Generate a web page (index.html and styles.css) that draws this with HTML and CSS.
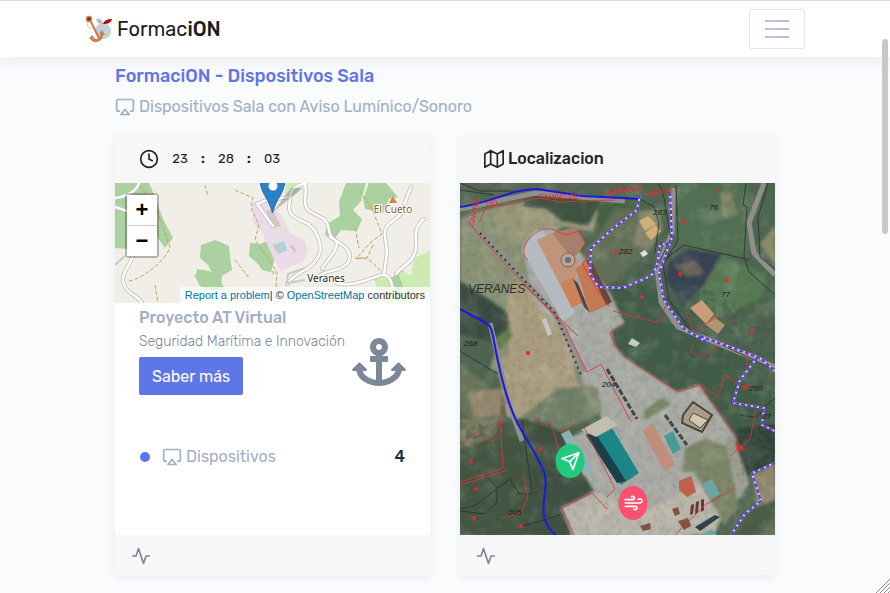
FILE: index.html
```html
<!DOCTYPE html>
<html lang="es">
<head>
<meta charset="utf-8">
<meta name="viewport" content="width=device-width, initial-scale=1">
<title>FormaciON</title>
<link rel="stylesheet" href="styles.css">
</head>
<body>
<svg class="sprite" aria-hidden="true">
  <symbol id="airplay" viewBox="0 0 24 24"><path d="M5 17H4a2 2 0 0 1-2-2V5a2 2 0 0 1 2-2h16a2 2 0 0 1 2 2v10a2 2 0 0 1-2 2h-1"/><path d="M12 15l5 6H7z"/></symbol>
  <symbol id="activity" viewBox="0 0 24 24"><path d="M22 12h-4l-3 9L9 3l-3 9H2"/></symbol>
</svg>
<header class="topbar">
  <div class="container topbar-row">
    <a class="brand" href="#">
      <svg class="brand-logo" viewBox="0 0 28 28" aria-hidden="true">
        <ellipse cx="18" cy="16" rx="8" ry="8" fill="#bcd3e6"/>
        <path d="M11 4c4-1 7 1 7 5-4 0-6-1-7-5z" fill="#b9bcc2"/>
        <path d="M18 9c1-4 5-5 9-5-1 4-4 5-9 5z" fill="#b50d14"/>
        <path d="M3 7c-2 4 1 7 5 6M12 12c5-2 12 0 13 4M20 19c4 1 6-1 5-3" fill="none" stroke="#e8cf86"/>
        <path d="M5 5l9 18" stroke="#c87945" stroke-width="2" fill="none"/>
        <circle cx="4" cy="4" r="2.500" fill="#7b2f20" stroke="#d0824e" stroke-width="1.500"/>
        <path d="M6 22c3 6 11 4 11-4" fill="none" stroke="#cf814d" stroke-width="3"/>
        <path d="M4 24l3-4 3 4zM14 19l3-4 3 5z" fill="#cf814d"/>
      </svg>
      <span>Formac<b>iON</b></span>
    </a>
    <button class="menu" type="button" aria-label="Menú"><span></span><span></span><span></span></button>
  </div>
</header>

<main class="container page">
  <h1 class="page-title">FormaciON - Dispositivos Sala</h1>
  <p class="page-sub"><svg class="icon"><use href="#airplay"/></svg>Dispositivos Sala con Aviso Lumínico/Sonoro</p>

  <div class="cards">
    <section class="card">
      <div class="card-head">
        <svg class="icon" viewBox="0 0 24 24"><circle cx="12" cy="12" r="10"/><path d="M12 6v6l4 2"/></svg>
        <div class="clock"><span>23</span><b>:</b><span>28</span><b>:</b><span>03</span></div>
      </div>
      <div class="street-map">
        <svg class="map-art" viewBox="0 0 315 120" preserveAspectRatio="xMidYMid slice">
          <rect width="315" height="120" fill="#f1eee8"/>
          <g fill="#abd1a0">
            <path d="M0 0h34l6 14 8 22 10 19-8 10-12-17-12-20H12V66L0 65z"/>
            <path d="M86 62l14-5 14 6 1 11 2 13-10 6-1 13-21-5-6-9 8-3 11 3-5-10-8-7z"/>
            <path d="M82 86l12 2 9 6 7 12-10 3-15-6-4-8z"/>
            <path d="M135 60l10 1 9-4 7 3-1 15-4 14-9-2-4-6-9-8z"/>
            <path d="M231 0h20l-5 18-8 9 9 9-5 12-16-1-8 11-8-6 2-11 13-8-1-14z"/>
            <path d="M254 0h17l12 14-9 2-6 14-18-4-2-10z"/>
            <path d="M276 95l12-8 3 8 6 9-10 14h-14z"/>
          </g>
          <g fill="#cdebb0"><path d="M172 0h14l-5 12-12-1z"/><path d="M258 95l9-2 8 5 4 22h-10zM282 87l14 5 3-17 16-7v40l-17 12h-14l4-17z"/></g>
          <path d="M137 22l14-8 17 21 7 15 14 7 4 11-5 11-23 9-7-14-11-24-9-10z" fill="#ebdbe8"/>
          <path d="M151 28l6-2 9 17-6 3zM157 60l5 2 3 6-4 1zM177 61l5 7-3 1-4-6zM156 87l5 2-3 3z" fill="#d3c7c1"/>
          <path d="M159 45l8-3 3 7-8 3z" fill="#eadfd8"/><path d="M161 61l8-3 3 9-8 4z" fill="#aad3df"/>
          <g fill="none" stroke="#c59e5f" stroke-dasharray="4 2">
            <path d="M90 2l3 12M120 7l18 8-2 10 8 17-4 15 12 17 10 15-2 31M120 77l14 18M14 98c14-2 38-22 41-34L42 28 23 0M40 102l3 18M245 8l12 18 10 25-11 8-15 17M258 62l-6 13h-12M242 76c14-4 20 10 28 16M240 45l4 20"/>
          </g>
          <g fill="none" stroke-linecap="round">
            <path d="M24 0c-3 9-11 13-24 15M0 24l12 4M18 73C12 88 4 92 10 104c4 7 13 9 17 16M158 43l-16-22 7-3 25-4M191 0c-12 3-16 8-16 16-1 7-2 12 2 16 8 7 20 7 25 20 5 12 6 17-4 29-5 6-17 8-26 20M190 1c3 10-4 20 4 27l15 8c8 7 1 15 12 22 4 8-8 17-14 28M215 54c14 8 24 14 18 26-8 10-26 6-31 16M221 100c15 4 31-3 45-8 12-2 12 16 14 28M296 4l-10 26c-4 9-18 8-16 24l2 14-3 24M309 36c-12 10-7 20-8 28-1 15-13 18-20 27" stroke="#bdbdbd" stroke-width="4"/>
            <path d="M24 0c-3 9-11 13-24 15M0 24l12 4M18 73C12 88 4 92 10 104c4 7 13 9 17 16M158 43l-16-22 7-3 25-4M191 0c-12 3-16 8-16 16-1 7-2 12 2 16 8 7 20 7 25 20 5 12 6 17-4 29-5 6-17 8-26 20M190 1c3 10-4 20 4 27l15 8c8 7 1 15 12 22 4 8-8 17-14 28M215 54c14 8 24 14 18 26-8 10-26 6-31 16M221 100c15 4 31-3 45-8 12-2 12 16 14 28M296 4l-10 26c-4 9-18 8-16 24l2 14-3 24M309 36c-12 10-7 20-8 28-1 15-13 18-20 27" stroke="#fff" stroke-width="2.500"/>
          </g>
          <path d="M0 82l10-9M190 85l-17 6-1 9 18-3" fill="none" stroke="#c9c9c9" stroke-width="2"/>
          <path d="M278 13l4 7h-8z" fill="#d38440"/>
          <text class="peak" x="278" y="30">El Cueto</text>
          <text class="town" x="211" y="99">Veranes</text>
          <path d="M158 29l18-24h12z" fill="#000" opacity=".2"/>
          <path d="M145-4c0 14 9 19 12.500 34C161 15 170 10 170-4c0-8-5-12-12.500-12S145-12 145-4z" fill="#2a81cb" stroke="#2467a2"/>
          <circle cx="158" cy="3" r="4.500" fill="#fff"/>
        </svg>
        <div class="zoom">
          <button type="button" aria-label="Acercar">+</button>
          <button type="button" aria-label="Alejar">−</button>
        </div>
        <div class="credit"><a href="#">Report a problem</a>| © <a href="#">OpenStreetMap</a> contributors</div>
      </div>
      <div class="card-body">
        <div class="project">
          <div>
            <h2>Proyecto AT Virtual</h2>
            <p>Seguridad Marítima e Innovación</p>
            <button class="more" type="button">Saber más</button>
          </div>
          <svg class="anchor" viewBox="0 0 576 512" aria-hidden="true"><path d="M12.971 352h32.394C67.172 454.735 181.944 512 288 512c106.229 0 220.853-57.380 242.635-160h32.394c10.691 0 16.045-12.926 8.485-20.485l-67.029-67.029c-4.686-4.686-12.284-4.686-16.971 0l-67.029 67.029c-7.560 7.560-2.206 20.485 8.485 20.485h35.146c-20.290 54.317-84.963 86.588-144.117 94.015V256h52c6.627 0 12-5.373 12-12v-40c0-6.627-5.373-12-12-12h-52v-5.470c37.281-13.226 64-48.793 64-90.530C384 42.979 340.880-.109 287.792 0 235.103.108 192.001 43.290 192 96c0 41.737 26.718 77.304 64 90.530V192h-52c-6.627 0-12 5.373-12 12v40c0 6.627 5.373 12 12 12h52v190.015c-58.936-7.399-123.820-39.679-144.117-94.015h35.146c10.691 0 16.045-12.926 8.485-20.485l-67.029-67.029c-4.686-4.686-12.284-4.686-16.971 0L4.485 331.515C-3.074 339.074 2.280 352 12.971 352zM288 64c17.645 0 32 14.355 32 32s-14.355 32-32 32-32-14.355-32-32 14.355-32 32-32z"/></svg>
        </div>
        <div class="count"><i class="dot"></i><svg class="icon"><use href="#airplay"/></svg><span>Dispositivos</span><strong>4</strong></div>
      </div>
      <div class="card-foot"><svg class="icon"><use href="#activity"/></svg></div>
    </section>

    <section class="card">
      <div class="card-head">
        <svg class="icon" viewBox="0 0 24 24"><path d="M1 6v16l7-4 8 4 7-4V2l-7 4-8-4zM8 2v16M16 6v16"/></svg>
        <h2>Localizacion</h2>
      </div>
      <div class="aerial">
        <svg class="map-art" viewBox="0 0 315 352" preserveAspectRatio="xMidYMid slice">
          <defs>
            <filter id="grain" x="0" y="0" width="100%" height="100%"><feTurbulence type="fractalNoise" baseFrequency=".16" numOctaves="4" seed="8"/><feColorMatrix values="0 0 0 0 .05  0 0 0 0 .1  0 0 0 0 .08  2.600 0 0 0 -1.100"/></filter>
            <filter id="light" x="0" y="0" width="100%" height="100%"><feTurbulence type="fractalNoise" baseFrequency=".05" numOctaves="4" seed="3"/><feColorMatrix values="0 0 0 0 .8  0 0 0 0 .8  0 0 0 0 .65  1.800 0 0 0 -.85"/></filter>
            <filter id="soft"><feGaussianBlur stdDeviation="1.500"/></filter>
            <filter id="fine"><feGaussianBlur stdDeviation=".5"/></filter>
            <clipPath id="woods"><path d="M0 98l32 20 17 14-2 15-18 12-29-8zM0 240l45 0 35-8 20 18 34 58-32 17 8 27H0zM64 15l35-4 40 8-10 24-28-5-14-12-23-2zM152 100l25-10 15-20 20-5 20 35 83 40v112l-40 2-35-52-22 7-53-35-10-12-3-14 13-8zM276 240h39v42l-32 14z"/></clipPath>
          </defs>
          <rect width="315" height="352" fill="#4f654f"/>
          <g filter="url(#soft)">
            <path d="M0 0h180v12L70 10 0 30z" fill="#566653"/>
            <path d="M0 35l15-4 20-8 45-8 55 10 17 28-35-7-30-4-16 30 35 60-6 60-70-5L45 130 0 98z" fill="#8a9175"/>
            <path d="M38 26l45-8 20 4 38 12-10 14-25-6-20 12-15 15-40-32z" fill="#999979"/>
            <path d="M48 100l28-1 27 48 17 30 14 6 6 35-26 16-27 5-40-5-10-54 12-12-2-33z" fill="#aa9c7f"/>
            <path d="M48 130l4 24-14 14-6-18-10-20 18-8z" fill="#607d50"/>
            <path d="M0 180l25 20 20 35-18 12-27-18z" fill="#69745b"/><path d="M8 209l35-4-3 27-26 4z" fill="#97876e"/>
            <path d="M0 98l32 20 17 14-2 15-18 12-29-8z" fill="#3a4a40"/>
            <path d="M0 240h42l35-9 31 23-9 20 9 36-10 42H0z" fill="#44543f"/>
            <path d="M0 236h38l-3 17-35 14z" fill="#7a7c60"/>
            <path d="M64 15l35-4 40 8-10 24-28-5-14-12-23-2z" fill="#3f5341"/>
            <path d="M140 22l40-12 7 45-20 30-20 20-20-36z" fill="#466045"/>
            <path d="M210 0h80l-3 76-67-13-15-30z" fill="#527052"/><path d="M260 9h10l8 22-15 4z" fill="#7e8466"/>
            <path d="M130 65l25-40 27 2 13 35-38 34-20 14z" fill="#637058"/>
            <path d="M180 28l18-2 5 20-13 20-17-4z" fill="#87866a"/>
            <path d="M210 76l20-10 32 5-20 33-20 20-17-30z" fill="#394355"/>
            <path d="M213 82l22-4 10 12-18 4z" fill="#6b6158"/>
            <path d="M262 72l45 20-5 22-40 20-25-15z" fill="#577954"/>
            <path d="M300 60l15-18v40z" fill="#83845f"/>
            <path d="M150 105l45-3 60 60 35 15 25 40v40l-40-5-35-46-22 7-60-40-10-40z" fill="#435d47"/>
            <path d="M62 65l10-15 18-6 30 25 30 42 14 29-13 8 3 14 10 12 53 35 22-7 35 50 15 48-20 30-54 32H115l-13-27 32-17-34-58 25-13 17-7-6-25-11-2-7-33-18-35-25-25z" fill="#aaaaa6"/>
            <path d="M98 205l28-1 10 1 6 25-22 10-20 8-22-8-18-5z" fill="#718066"/>
            <path d="M118 180l6 22 14 2 4 24-8 3-20-40z" fill="#828b72"/>
            <path d="M78 238l22 10 34 60-30 16 8 28H65z" fill="#404f40"/>
            <path d="M102 325l34-17 44 25 80-45 14 20-20 44H112z" fill="#b9b5aa"/>
            <path d="M183 228l20-14 8 8-25 15z" fill="#748361"/>
            <path d="M225 265l20-10 22 8 12 60-15 20-10-20-20-34-12 0z" fill="#7b8568"/>
            <path d="M265 255l12-3 12 40-8 24-6-20z" fill="#9c9c8f"/>
            <path d="M276 246l39-6v42l-28 12-11-32z" fill="#334238"/><path d="M292 292l23-12v38l-18 5z" fill="#90876c"/>
            <path d="M276 352l20-28 19-7v35z" fill="#4b5d46"/>
          </g>
          <rect width="315" height="352" filter="url(#light)" opacity=".25"/>
          <rect width="315" height="352" filter="url(#grain)" opacity=".14"/>
          <rect width="315" height="352" filter="url(#grain)" clip-path="url(#woods)" opacity=".6"/>
          <g filter="url(#fine)">
            <g fill="none" stroke="#8f8f8b" stroke-width="5" stroke-linejoin="round"><path d="M0 26l75-16 90 8M9 34l10 15 75 80 30 60M213 5l-1 45-15 35 4 34 17 25 97 40M304 0l-15 40 5 30 21 22M30 140l18 78 14 40"/></g>
            <path d="M62 68l13-20 8-2 32 84-12 8z" fill="#b5bbc1"/>
            <path d="M77 57l15-7 23 18 4 18-6 14 12 17-13 8z" fill="#c1947a"/><path d="M92 50l23-6 10 16-8 12-6 2z" fill="#a87e6c"/>
            <path d="M100 100l12 25 14-7-13-24z" fill="#cb835c"/><path d="M116 86l10-9 16 27 8 17-20 9z" fill="#c57953"/><path d="M126 77l6 2 20 40-6 3z" fill="#65463f"/><path d="M113 96l5 4 12 30-6-6z" fill="#594640"/>
            <path d="M182 247l11-6 22 41-10 7z" fill="#bf8f79"/><path d="M230 125l12-8 12 14-8 10z" fill="#c99e76"/><path d="M245 141l9-7 11 8-7 9z" fill="#b39570"/>
            <path d="M179 38l9-5 8 8-11 7zM185 50l10-8 6 6-10 9z" fill="#d1b077"/><path d="M180 70l5-3 3 4-5 3z" fill="#dfe5e4"/>
            <circle cx="108" cy="77" r="7" fill="#b8a69a" stroke="#8b5b50"/><circle cx="108" cy="77" r="3" fill="#67727d"/>
            <path d="M126 252l23-12 30 50-18 12z" fill="#1f8585"/><path d="M126 252l8-4 32 50-9 2z" fill="#1c3f4b"/><path d="M121 247l25-14 12 9-22 12z" fill="#c2bcb1"/>
            <path d="M101 251l8-4 24 40-9 6z" fill="#8fb0b4"/><path d="M204 253l9-5 8 18-8 5z" fill="#469a95"/><path d="M242 301l10-5 8 15-9 5zM240 352l12-6 5 6z" fill="#6aa7a3"/>
            <path d="M223 232l10-13 19 13-10 17-20-9z" fill="#a89c87" stroke="#4b4339" stroke-width="2"/><path d="M229 237l4-7 15 7-8 8z" fill="#d2c7b5" stroke="#574436"/>
            <path d="M219 298l12-5 5 16-9 5-8-7z" fill="#c0604b"/><path d="M231 322l3-1-1 10-3 1zM236 319l3-1-1 12-3 1zM241 317l3-1v11l-3 2z" fill="#6d3630"/>
            <path d="M147 186l30 50M205 232l22 30" stroke="#3a474b" stroke-width="3" stroke-dasharray="6 2"/>
            <g fill="#80553f"><path d="M212 326l6-2 2 7-5 2zM218 338l10-3 3 8-7 4zM180 343l10-3 1 6-8 2z"/><path d="M235 344l20-12 5 2-20 14z" fill="#33434c"/></g>
            <path d="M82 137l4-2 6 16-4 2zM172 155l8 5-4 4-8-3z" fill="#c5c8c5"/>
          </g>
          <path d="M20 50l75 80 26 62" fill="none" stroke="#2c3730" stroke-width="2" stroke-dasharray="2 4"/>
          <g fill="none" stroke="#28342f" stroke-width="1" opacity=".85"><path d="M198 0l5 9 8 46-13 27M200 80l24-18 66 15M286 0l-3 22 4 2-3 50 5 15 26 23M216 2l2 55-15 25 6 35 21 30 85 40M308 0l-10 34 2 40 15 12M0 168l38 23M62 236l10 75H59l-9-15-36 27-14 3M0 328l25 3 12-12v-14l-12-14M60 344l40-12M315 215c-20 15-9 22-35 17M0 7l34 5M0 0l20 8h35M180 16l14 8 5 16-4 30"/></g>
          <g fill="none" stroke="#db3539" opacity=".85">
            <path d="M68 77c-12-10 4-30 18-31 10-2 12 7 24 5l10-3 5 12 2 15-5 5 14 25 13 18M7 37l18 22 80 85 22 45 14-8 30 58M20 38l5-12 55-11 20 4 55-2M165 140l-15 10 5 12 10 12 53 35 22-7 35 50 5 12M240 202l18 12 7-22 18 12 13-4M153 128l45 12 10-22M226 130l8 18 28-17M234 159l-3 10 11 5 23-16M287 170v16M296 226l-6 30-20 17M46 218l-6 15 3 52-43 14M38 240l4 8-8 11-20-8-14 11M0 302l48-15M41 335l20-5 7-17-5-22M72 232l10 10 9-2 11 36M100 249l13-6M123 242l32 64-8 8M102 325l30-15 15 16M102 325l12 27M215 352l30-30 30-17"/>
            <path d="M65 103l53 50" stroke="#a93d3b"/>
          </g>
          <path d="M0 24C32 20 50 6 77 6l46 7 57 3M0 126l26 14c5 2 6 8 8 18 5 28 12 58 22 79 9 19 25 40 29 55 3 15-5 30 0 45 3 8 7 12 11 15" fill="none" stroke="#1919e0" stroke-width="2"/>
          <g fill="none"><path d="M180 12l-3 15-22 17-24 21-1 26 9 13 24 1 28-12 6-10 3-22h12M210 9l2 45-13 37 5 26 20 29 23 13M240 153l60 22 15 13M297 175l-17 22-7 23 31 5-2 17 13 6M315 280l-23 10 9 28-16 13-14 21" stroke="#e0cdf0" stroke-width="2"/><path d="M180 12l-3 15-22 17-24 21-1 26 9 13 24 1 28-12 6-10 3-22h12M210 9l2 45-13 37 5 26 20 29 23 13M240 153l60 22 15 13M297 175l-17 22-7 23 31 5-2 17 13 6M315 280l-23 10 9 28-16 13-14 21" stroke="#5634dd" stroke-width="2" stroke-dasharray="4 2"/></g>
          <g fill="#151b17" class="parcels"><text x="249" y="27">76</text><text x="193" y="32">283</text><text x="159" y="71">282</text><text x="261" y="114">77</text><text x="4" y="163">268</text><text x="142" y="204">204</text><text x="289" y="208">260</text><text x="48" y="332">205</text><text x="302" y="236">27</text></g>
          <text class="place" x="8" y="110">VERANES</text>
          <g class="street"><text x="146" y="12" transform="rotate(-7 146 12)">GARANTIA</text><text x="188" y="13" transform="rotate(-7 188 13)">MENTO</text><text x="14" y="44" transform="rotate(-80 14 44)">CAMINO</text><text x="79" y="16">CAMINO DE</text><text x="27" y="24" transform="rotate(-17 27 24)">DEL</text></g>
          <g fill="#e6282c"><circle cx="223" cy="38" r="2"/><circle cx="258" cy="8" r="1.500"/><circle cx="156" cy="69" r="2"/><circle cx="220" cy="91" r="2"/><circle cx="267" cy="97" r="2"/><circle cx="182" cy="114" r="2"/><circle cx="68" cy="170" r="2"/><circle cx="292" cy="148" r="2"/><circle cx="285" cy="205" r="2"/><circle cx="280" cy="265" r="3"/><circle cx="11" cy="278" r="2"/><circle cx="16" cy="306" r="2"/><circle cx="14" cy="335" r="2"/><circle cx="80" cy="266" r="2"/><circle cx="61" cy="343" r="2"/></g>
        </svg>
        <a class="pin pin-send" href="#" aria-label="Enviar"><svg class="icon" viewBox="0 0 24 24"><path d="M22 2L11 13M22 2l-7 20-4-9-9-4z"/></svg></a>
        <a class="pin pin-wind" href="#" aria-label="Viento"><svg class="icon" viewBox="0 0 24 24"><path d="M9.590 4.590A2 2 0 1 1 11 8H2m10.590 11.410A2 2 0 1 0 14 16H2m15.730-8.270A2.500 2.500 0 1 1 19.500 12H2"/></svg></a>
      </div>
      <div class="card-foot"><svg class="icon"><use href="#activity"/></svg></div>
    </section>
  </div>
</main>
<div class="thumb"></div>
<svg class="grip" viewBox="0 0 14 14" aria-hidden="true"><path d="M0 14L14 0M4 14L14 4M8 14l6-6M12 14l2-2"/></svg>
</body>
</html>
```
FILE: styles.css
```css
* { box-sizing: border-box; }
body {
  margin: 0;
  background: #fafbfd;
  color: #212529;
  font: 400 16px/24px Rubik, Roboto, sans-serif;
}
h1, h2, p { margin: 0; }
a { text-decoration: none; }
button { font-family: inherit; cursor: pointer; }
.sprite { position: absolute; width: 0; height: 0; }
.icon {
  width: 20px;
  height: 20px;
  flex: none;
  fill: none;
  stroke: currentColor;
  stroke-width: 2;
  stroke-linecap: round;
  stroke-linejoin: round;
}
.container { width: 100%; max-width: 720px; margin: 0 auto; }

.topbar {
  background: #fff;
  border-top: 1px solid #dcdcdc;
  box-shadow: 0 4px 16px rgba(60, 110, 150, .1);
}
.topbar-row { display: flex; align-items: center; justify-content: space-between; height: 56px; }
.brand { display: flex; align-items: center; gap: 4px; color: #1c1c1c; font-size: 20px; }
.brand b { font-weight: 500; }
.brand-logo { width: 28px; height: 28px; }
.menu {
  display: flex;
  flex-direction: column;
  align-items: center;
  justify-content: center;
  gap: 6px;
  width: 56px;
  height: 40px;
  padding: 0;
  background: #fff;
  border: 1px solid #e2e4e6;
  border-radius: 2px;
}
.menu span { width: 24px; height: 2px; background: #b9c2da; }

.page { padding: 6px 30px 18px; }
.page-title { color: #5f76e8; font-size: 18px; line-height: 26px; font-weight: 500; }
.page-sub { display: flex; align-items: center; gap: 4px; margin: 6px 0 16px; color: #a1aec4; }
.cards { display: grid; grid-template-columns: repeat(2, minmax(0, 1fr)); gap: 30px; }

.card {
  display: flex;
  flex-direction: column;
  background: #fff;
  border-radius: 4px;
  box-shadow: 0 3px 9px rgba(162, 176, 190, .2);
}
.card-head {
  display: flex;
  align-items: center;
  gap: 4px;
  height: 48px;
  padding: 0 24px;
  background: #f7f7f7;
  border-radius: 4px 4px 0 0;
}
.card-head h2 { font-size: 16px; font-weight: 500; }
.clock { display: flex; font-size: 13px; padding-left: 9px; }
.clock span { width: 16px; text-align: center; }
.clock b { width: 30px; text-align: center; font-weight: 700; }
.card-foot {
  height: 40px;
  padding: 11px 16px;
  background: #f7f7f7;
  border-radius: 0 0 4px 4px;
  color: #7c8798;
  line-height: 0;
}

.street-map, .aerial { position: relative; overflow: hidden; }
.street-map { height: 120px; }
.aerial { height: 352px; }
.map-art { display: block; width: 100%; height: 100%; }
.peak, .town { font: 10px "Noto Sans", sans-serif; text-anchor: middle; stroke: #fff; stroke-width: 2px; paint-order: stroke; }
.peak { fill: #8b5332; }
.town { fill: #222; }
.parcels { font: italic 8px "Liberation Sans", sans-serif; }
.place { font: italic 12px "Liberation Sans", sans-serif; fill: #28302b; }
.street { font: 7px "Liberation Sans", sans-serif; fill: #ee2227; }
.zoom {
  position: absolute;
  top: 10px;
  left: 10px;
  border: 2px solid rgba(0, 0, 0, .25);
  border-radius: 4px;
  background-clip: padding-box;
}
.zoom button {
  display: block;
  width: 30px;
  height: 30px;
  padding: 0;
  border: 0;
  background: #fff;
  color: #000;
  font: 700 22px/30px "Liberation Sans", sans-serif;
}
.zoom button:first-child { height: 31px; border-bottom: 1px solid #ccc; }
.credit {
  position: absolute;
  right: 0;
  bottom: 0;
  padding: 0 5px;
  background: rgba(255, 255, 255, .75);
  color: #333;
  font: 11px/16px "Liberation Sans", sans-serif;
  white-space: nowrap;
}
.credit a { color: #0078a8; }

.card-body { flex: 1; padding: 1px 24px 0; }
.project { display: flex; align-items: center; justify-content: space-between; }
.project h2 { color: #a1aec4; font-size: 16px; line-height: 28px; font-weight: 500; }
.project p { color: #7c8798; font-size: 14px; line-height: 20px; font-weight: 300; margin-bottom: 5px; white-space: nowrap; }
.more {
  height: 38px;
  padding: 0 13px;
  border: 0;
  border-radius: 2px;
  background: #5f76e8;
  color: #fff;
  font-size: 16px;
}
.anchor { width: 54px; height: 48px; flex: none; margin-top: 24px; fill: #7c8798; }
.count { display: flex; align-items: center; gap: 4px; margin-top: 50px; padding: 0 1px; color: #a1aec4; }
.count strong { margin-left: auto; color: #1c2d41; font-weight: 500; }
.dot { width: 10px; height: 10px; margin-right: 8px; border-radius: 50%; background: #5f76e8; }

.pin {
  position: absolute;
  display: flex;
  align-items: center;
  justify-content: center;
  width: 29px;
  height: 34px;
  border-radius: 50%;
  color: #fff;
  transform: translate(-50%, -50%);
}
.pin-send { left: 35%; top: 79%; background: #22ca80; }
.pin-wind { left: 55%; top: 91%; background: #ff4f70; }

.thumb { position: absolute; top: 39px; right: 2px; width: 6px; height: 195px; border-radius: 3px; background: #c7c8ca; }
.grip { position: absolute; right: 0; bottom: 0; width: 14px; height: 14px; stroke: #888; fill: none; }
```
